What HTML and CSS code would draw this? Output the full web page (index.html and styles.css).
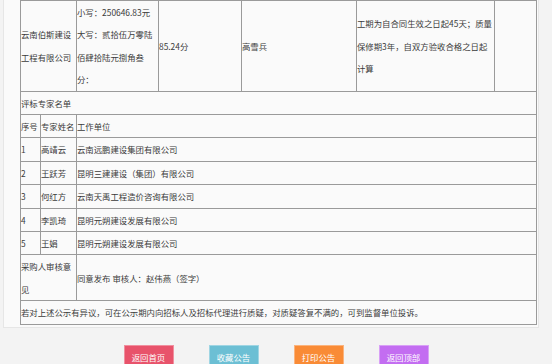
FILE: index.html
```html
<!DOCTYPE html>
<html lang="zh-CN">
<head>
    <meta charset="UTF-8">
    <meta name="viewport" content="width=device-width, initial-scale=1.0">
    <title>中标候选人公示</title>
    <link rel="stylesheet" href="styles.css">
</head>
<body>
    <div class="panel">
        <table class="notice">
            <colgroup>
                <col class="c-no">
                <col class="c-name">
                <col class="c-price">
                <col class="c-score">
                <col class="c-manager">
                <col class="c-term">
                <col class="c-extra">
            </colgroup>
            <tr>
                <td colspan="2">云南伯斯建设工程有限公司</td>
                <td>小写：250646.83元<br>大写：贰拾伍万零陆佰肆拾陆元捌角叁分：</td>
                <td>85.24分</td>
                <td>高雪兵</td>
                <td>工期为自合同生效之日起45天；质量保修期3年，自双方验收合格之日起计算</td>
                <td></td>
            </tr>
            <tr>
                <td colspan="7">评标专家名单</td>
            </tr>
            <tr>
                <td>序号</td>
                <td>专家姓名</td>
                <td colspan="5">工作单位</td>
            </tr>
            <tr>
                <td>1</td>
                <td>高靖云</td>
                <td colspan="5">云南远鹏建设集团有限公司</td>
            </tr>
            <tr>
                <td>2</td>
                <td>王跃芳</td>
                <td colspan="5">昆明三建建设（集团）有限公司</td>
            </tr>
            <tr>
                <td>3</td>
                <td>何红方</td>
                <td colspan="5">云南天禹工程造价咨询有限公司</td>
            </tr>
            <tr>
                <td>4</td>
                <td>李凯琦</td>
                <td colspan="5">昆明元朔建设发展有限公司</td>
            </tr>
            <tr>
                <td>5</td>
                <td>王娟</td>
                <td colspan="5">昆明元朔建设发展有限公司</td>
            </tr>
            <tr>
                <td colspan="2">采购人审核意见</td>
                <td colspan="5">同意发布 审核人：赵伟燕（签字）</td>
            </tr>
            <tr>
                <td colspan="7">若对上述公示有异议，可在公示期内向招标人及招标代理进行质疑，对质疑答复不满的，可到监督单位投诉。</td>
            </tr>
        </table>
    </div>
    <div class="actions">
        <a href="#" class="btn btn-home">返回首页</a>
        <a href="#" class="btn btn-save">收藏公告</a>
        <a href="#" class="btn btn-print">打印公告</a>
        <a href="#" class="btn btn-top">返回顶部</a>
    </div>
</body>
</html>
```

FILE: styles.css
```css
body {
    margin: 0;
    padding: 0;
    background: #f3f3f3;
    font-family: "Noto Sans CJK SC", "Microsoft YaHei", sans-serif;
    font-size: 8.4px;
    color: #3a3a3a;
}
.panel {
    width: 518px;
    margin-left: 3px;
    padding: 0 0 2px 16px;
    background: #fafafa;
    border-left: 1px solid #e6e6e6;
    border-right: 1px solid #e6e6e6;
    border-bottom: 1px solid #e6e6e6;
}
.notice {
    width: 516px;
    border-collapse: collapse;
    table-layout: fixed;
}
.notice td {
    border: 1px solid #9a9a9a;
    padding: 0;
    line-height: 22.4px;
    vertical-align: middle;
    text-align: left;
}
.c-no { width: 20px; }
.c-name { width: 36px; }
.c-price { width: 82px; }
.c-score { width: 83px; }
.c-manager { width: 115px; }
.c-term { width: 138px; }
.c-extra { width: 42px; }
.actions {
    display: flex;
    justify-content: center;
    gap: 35px;
    padding-top: 17px;
}
.btn {
    display: block;
    width: 48px;
    height: 22px;
    line-height: 22px;
    text-align: center;
    color: #fff;
    text-decoration: none;
    border: 1px solid rgba(255, 255, 255, 0.35);
}
.btn-home { background: #e8536b; }
.btn-save { background: #6cbfd4; }
.btn-print { background: #f98b36; }
.btn-top { background: #c36df1; }
```
